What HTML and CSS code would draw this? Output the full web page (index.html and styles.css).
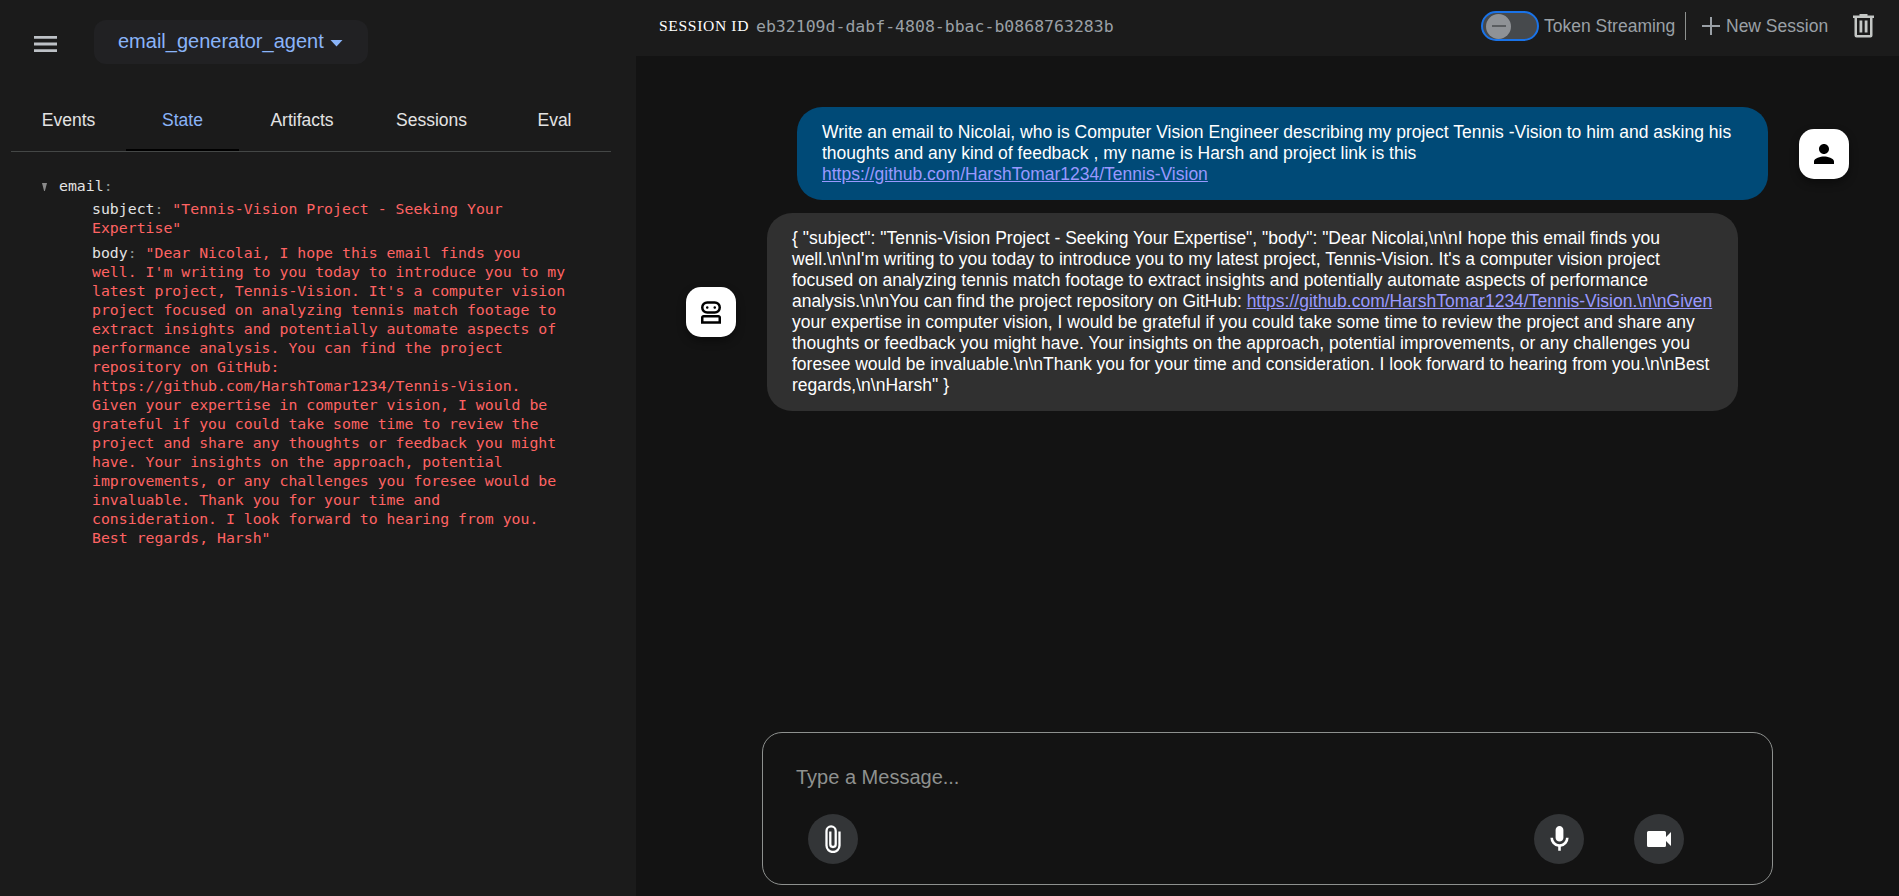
FILE: index.html
```html
<!DOCTYPE html>
<html lang="en">
<head>
<meta charset="utf-8">
<title>Agent Development Kit Dev UI</title>
<link rel="stylesheet" href="styles.css">
</head>
<body>
<div class="app">
  <aside class="sidebar">
    <div class="sidebar-head">
      <svg class="menu-icon" viewBox="0 0 23 16"><path d="M0 0h23v2.8H0zM0 6.6h23v2.8H0zM0 13.2h23V16H0z"/></svg>
      <div class="agent-select"><span>email_generator_agent</span><svg class="caret" viewBox="0 0 12 7"><path d="M0 0h12L6 6.5z"/></svg></div>
    </div>
    <nav class="tabs">
      <div class="tab">Events</div>
      <div class="tab active">State</div>
      <div class="tab">Artifacts</div>
      <div class="tab">Sessions</div>
      <div class="tab">Eval</div>
    </nav>
    <div class="json">
      <div class="json-root"><svg class="toggler" viewBox="0 0 5 8"><path d="M0 0h5L2.9 8h-.8z"/></svg><span class="key">email</span><span class="colon">:</span></div>
      <div class="json-row subject"><span class="key">subject</span><span class="colon">: </span>"Tennis-Vision Project - Seeking Your<br>Expertise"</div>
      <div class="json-row"><span class="key">body</span><span class="colon">: </span>"Dear Nicolai, I hope this email finds you<br>well. I'm writing to you today to introduce you to my<br>latest project, Tennis-Vision. It's a computer vision<br>project focused on analyzing tennis match footage to<br>extract insights and potentially automate aspects of<br>performance analysis. You can find the project<br>repository on GitHub:<br>https://github.com/HarshTomar1234/Tennis-Vision.<br>Given your expertise in computer vision, I would be<br>grateful if you could take some time to review the<br>project and share any thoughts or feedback you might<br>have. Your insights on the approach, potential<br>improvements, or any challenges you foresee would be<br>invaluable. Thank you for your time and<br>consideration. I look forward to hearing from you.<br>Best regards, Harsh"</div>
    </div>
  </aside>
  <main class="main">
    <header class="topbar">
      <span class="session-label">SESSION ID</span>
      <span class="session-id">eb32109d-dabf-4808-bbac-b0868763283b</span>
      <div class="actions">
        <div class="switch"><div class="knob"><span class="dash"></span></div></div>
        <span class="stream-label">Token Streaming</span>
        <span class="divider"></span>
        <svg class="plus" viewBox="0 0 18 18"><path d="M8 0h2v8h8v2h-8v8H8v-8H0V8h8z"/></svg>
        <span class="new-label">New Session</span>
        <svg class="trash" viewBox="0 0 21 24"><path fill-rule="evenodd" d="M6.500 0h8v1.500H21V4h-1.500v17.500q0 2-2 2h-14q-2 0-2-2V4H0V1.500h6.500zM4 4v17h13V4zM6.500 6.500h2.800v12H6.500zM11.700 6.500h2.800v12h-2.800z"/></svg>
      </div>
    </header>
    <section class="chat">
      <div class="message user">
        <div class="bubble">Write an email to Nicolai, who is Computer Vision Engineer describing my project Tennis -Vision to him and asking his<br>thoughts and any kind of feedback , my name is Harsh and project link is this<br><a>https://github.com/HarshTomar1234/Tennis-Vision</a></div>
        <div class="avatar"><svg class="person" viewBox="4 4 16 16"><path d="M12 12c2.210 0 4-1.790 4-4s-1.790-4-4-4-4 1.790-4 4 1.790 4 4 4zm0 2c-2.670 0-8 1.340-8 4v2h16v-2c0-2.660-5.330-4-8-4z"/></svg></div>
      </div>
      <div class="message bot">
        <div class="avatar"><svg class="robot" viewBox="160 -880 640 800"><path d="M160-120v-200q0-33 23.500-56.500T240-400h480q33 0 56.500 23.500T800-320v200H160Zm200-320q-83 0-141.500-58.500T160-640q0-83 58.500-141.500T360-840h240q83 0 141.500 58.500T800-640q0 83-58.500 141.500T600-440H360ZM240-200h480v-120H240v120Zm120-320h240q50 0 85-35t35-85q0-50-35-85t-85-35H360q-50 0-85 35t-35 85q0 50 35 85t85 35Zm0-80q17 0 28.500-11.500T400-640q0-17-11.500-28.500T360-680q-17 0-28.500 11.500T320-640q0 17 11.500 28.500T360-600Zm240 0q17 0 28.500-11.500T640-640q0-17-11.500-28.500T600-680q-17 0-28.500 11.500T560-640q0 17 11.500 28.500T600-600Z"/></svg></div>
        <div class="bubble">{ "subject": "Tennis-Vision Project - Seeking Your Expertise", "body": "Dear Nicolai,\n\nI hope this email finds you<br>well.\n\nI'm writing to you today to introduce you to my latest project, Tennis-Vision. It's a computer vision project<br>focused on analyzing tennis match footage to extract insights and potentially automate aspects of performance<br>analysis.\n\nYou can find the project repository on GitHub: <a>https://github.com/HarshTomar1234/Tennis-Vision.\n\nGiven</a><br>your expertise in computer vision, I would be grateful if you could take some time to review the project and share any<br>thoughts or feedback you might have. Your insights on the approach, potential improvements, or any challenges you<br>foresee would be invaluable.\n\nThank you for your time and consideration. I look forward to hearing from you.\n\nBest<br>regards,\n\nHarsh" }</div>
      </div>
    </section>
    <div class="composer">
      <div class="placeholder">Type a Message...</div>
      <div class="tools">
        <div class="round"><svg class="clip" viewBox="0 0 16 28"><path d="M14.500 6.500v14a6.500 6.500 0 0 1-13 0V6a4.600 4.600 0 0 1 9.200 0v13.300a2.700 2.700 0 0 1-5.400 0V6.500"/></svg></div>
        <div class="round mic-btn"><svg class="mic" viewBox="200 -880 560 800"><path d="M480-400q-50 0-85-35t-35-85v-240q0-50 35-85t85-35q50 0 85 35t35 85v240q0 50-35 85t-85 35Zm-40 280v-123q-104-14-172-93t-68-184h80q0 83 58.500 141.500T480-320q83 0 141.500-58.500T680-520h80q0 105-68 184t-172 93v123h-80Z"/></svg></div>
        <div class="round"><svg class="video" viewBox="0 0 24 16"><path d="M1.500 0h16q1.500 0 1.500 1.500V6l5-5v14l-5-5v4.500q0 1.500-1.500 1.500h-16Q0 16 0 14.500v-13Q0 0 1.500 0z"/></svg></div>
      </div>
    </div>
  </main>
</div>
</body>
</html>
```

FILE: styles.css
```css
* { box-sizing: border-box; }
body { margin: 0; background: #131313; font-family: "Liberation Sans", Arial, sans-serif; font-size: 17.5px; color: #fff; }
svg { display: block; fill: currentColor; flex: none; }
.app { display: flex; width: 1899px; height: 896px; overflow: hidden; }

.sidebar { width: 636px; flex: none; background: #1b1b1b; }
.sidebar-head { display: flex; align-items: flex-start; padding: 20px 0 0 34px; height: 89px; }
.menu-icon { width: 23px; height: 16px; margin-top: 16px; color: #bdc1c6; }
.agent-select { display: flex; align-items: center; gap: 6px; width: 274px; height: 44px; margin-left: 37px; padding: 0 0 2px 24px; border-radius: 12px; background: #212123; color: #8ab4f8; font-size: 20px; }
.caret { width: 13px; height: 7px; margin-top: 4px; }
.tabs { display: grid; grid-template-columns: 115px 113px 126px 133px 113px; width: 600px; height: 63px; margin-left: 11px; border-bottom: 1px solid #444746; }
.tab { display: flex; align-items: center; justify-content: center; padding-top: 2px; color: #e3e3e3; border-bottom: 2px solid transparent; }
.tab.active { color: #8ab4f8; border-bottom-color: #000; }
.json { padding: 21px 0 0 42px; font: 14.830px/19px "DejaVu Sans Mono", monospace; color: #ff6363; white-space: nowrap; }
.json-root { display: flex; align-items: center; height: 24px; margin-bottom: 2px; }
.toggler { width: 5px; height: 8px; margin: 3px 12px 0 0; color: #8a8a8a; }
.key { color: #e3e3e3; }
.colon { color: #8e918f; }
.json-row { padding-left: 50px; }
.subject { margin-bottom: 6px; }

.main { flex: 1; display: flex; flex-direction: column; background: #131313; }
.topbar { display: flex; align-items: center; height: 56px; padding: 0 25px 4px 23px; background: #1b1b1b; color: #9aa0a6; }
.session-label { width: 97px; font: 15.600px "Liberation Serif", serif; letter-spacing: .65px; color: #fff; white-space: nowrap; }
.session-id { font: 16.510px "DejaVu Sans Mono", monospace; color: #9aa0a6; }
.actions { display: flex; align-items: center; margin-left: auto; }
.switch { display: flex; align-items: center; width: 58px; height: 30px; padding: 0 3px; border: 2px solid #1a73e8; border-radius: 15px; background: #46494c; }
.knob { display: flex; align-items: center; justify-content: center; width: 25px; height: 25px; border-radius: 50%; background: #8f9296; }
.dash { width: 14px; height: 2px; background: #5a5d60; }
.stream-label { width: 141px; margin-left: 5px; white-space: nowrap; }
.divider { width: 1px; height: 28px; background: #8e918f; }
.plus { width: 18px; height: 18px; margin-left: 16px; }
.new-label { width: 127px; margin-left: 6px; white-space: nowrap; }
.trash { width: 21px; height: 24px; color: #c4c7c5; }

.chat { flex: 1; padding: 51px 50px 0; }
.message { display: flex; white-space: nowrap; line-height: 21px; }
.bubble { width: 971px; padding: 15px 25px; border-radius: 25px; }
.bubble a { color: #9999ff; text-decoration: underline; }
.user { justify-content: flex-end; margin-bottom: 13px; gap: 31px; }
.user .bubble { background: #004a77; }
.user .avatar { margin-top: 22px; }
.bot { gap: 31px; }
.bot .bubble { background: #303030; }
.bot .avatar { margin-top: 74px; }
.avatar { display: flex; align-items: center; justify-content: center; width: 50px; height: 50px; border-radius: 15px; background: #fff; color: #000; box-shadow: 0 4px 8px rgba(0, 0, 0, .4); }
.person { width: 20px; height: 20px; }
.robot { width: 20px; height: 25px; }

.composer { width: 1011px; height: 153px; margin: 0 0 11px 126px; padding: 32px 33px 0; border: 1px solid #8e918f; border-radius: 20px; }
.placeholder { height: 49px; line-height: 24px; font-size: 20px; color: #8e918f; }
.tools { display: flex; padding: 0 55px 0 12px; }
.round { display: flex; align-items: center; justify-content: center; width: 50px; height: 50px; border-radius: 50%; background: #333537; }
.mic-btn { margin: 0 50px 0 auto; }
.clip { width: 16px; height: 28px; fill: none; stroke: #fff; stroke-width: 2.300px; }
.mic { width: 19px; height: 26px; }
.video { width: 24px; height: 16px; }
```
